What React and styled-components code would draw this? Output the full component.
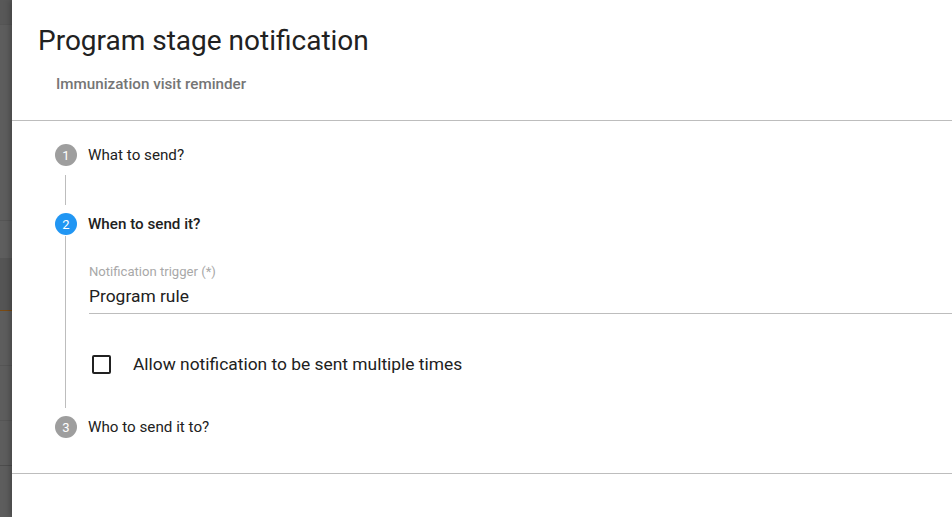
import React from 'react';
import styled, { createGlobalStyle } from 'styled-components';

const GlobalStyle = createGlobalStyle`
	html, body {
		margin: 0;
		padding: 0;
		height: 100%;
		overflow: hidden;
	}
	body {
		font-family: Roboto, 'Liberation Sans', sans-serif;
		background: #5c5c5c;
	}
	#root {
		height: 100%;
	}
`;

const Page = styled.div`
	display: flex;
	height: 517px;
	width: 952px;
`;

const Backdrop = styled.div`
	width: 12px;
	flex-shrink: 0;
	display: flex;
	flex-direction: column;
	background: #5d5d5d;
`;

const Band = styled.div`
	height: ${(p) => p.h}px;
	background: ${(p) => p.bg || '#5d5d5d'};
	border-bottom: 1px solid ${(p) => p.line || '#555'};
	flex-shrink: 0;
`;

const Dialog = styled.div`
	flex: 1;
	background: #fff;
	display: flex;
	flex-direction: column;
	overflow: hidden;
	box-shadow: -2px 0 6px rgba(0, 0, 0, 0.25);
`;

const Header = styled.div`
	padding: 24px 26px 0;
	height: 120px;
	box-sizing: border-box;
	flex-shrink: 0;
`;

const Title = styled.h2`
	margin: 0;
	font-size: 28px;
	font-weight: 400;
	line-height: 33px;
	color: #212121;
`;

const Subtitle = styled.div`
	margin: 19px 0 0 18px;
	font-size: 15.2px;
	font-weight: 500;
	line-height: 16px;
	color: #757575;
`;

const Divider = styled.div`
	height: 1px;
	background: #bdbdbd;
	flex-shrink: 0;
`;

const Stepper = styled.div`
	padding: 23px 0 35px 43px;
	display: flex;
	flex-direction: column;
`;

const StepRow = styled.div`
	display: flex;
	align-items: center;
	height: 22px;
`;

const StepIcon = styled.span`
	width: 22px;
	height: 22px;
	border-radius: 50%;
	background: ${(p) => (p.active ? '#2196f3' : '#9e9e9e')};
	color: #fff;
	font-size: 13px;
	display: flex;
	align-items: center;
	justify-content: center;
	flex-shrink: 0;
`;

const StepLabel = styled.span`
	margin-left: 11px;
	font-size: 15.2px;
	font-weight: ${(p) => (p.active ? 500 : 400)};
	color: #212121;
`;

const Connector = styled.div`
	margin: 9px 0 8px 10px;
	height: 30px;
	border-left: 1px solid #bdbdbd;
`;

const StepContent = styled.div`
	margin: 1px 0 8px 10px;
	border-left: 1px solid #bdbdbd;
	padding: 28px 0 35px 23px;
`;

const Field = styled.div`
	display: flex;
	flex-direction: column;
	border-bottom: 1px solid #bdbdbd;
	margin-right: -40px;
`;

const FieldLabel = styled.label`
	font-size: 13.1px;
	line-height: 16px;
	color: #a8a8a8;
`;

const FieldValue = styled.div`
	margin-top: 6px;
	padding-bottom: 7px;
	font-size: 17.4px;
	line-height: 20px;
	color: #212121;
`;

const CheckRow = styled.label`
	display: flex;
	align-items: center;
	margin-top: 41px;
	padding-left: 3px;
	height: 18px;
`;

const Box = styled.span`
	width: 15px;
	height: 15px;
	border: 2px solid #212121;
	border-radius: 2px;
	flex-shrink: 0;
`;

const CheckText = styled.span`
	margin-left: 22px;
	font-size: 17.4px;
	color: #212121;
`;

const App = () => {
	const bands = [
		{ h: 24, bg: '#585858' },
		{ h: 195 },
		{ h: 37, bg: '#5e5e5e' },
		{ h: 51, bg: '#555555', line: '#7a4a12' },
		{ h: 54 },
		{ h: 54 },
		{ h: 44, line: '#4d4d4d' },
		{ h: 60 },
	];

	return (
		<>
			<GlobalStyle />
			<Page>
				<Backdrop>
					{bands.map((b, i) => (
						<Band key={i} h={b.h} bg={b.bg} line={b.line} />
					))}
				</Backdrop>
				<Dialog>
					<Header>
						<Title>Program stage notification</Title>
						<Subtitle>Immunization visit reminder</Subtitle>
					</Header>
					<Divider />
					<Stepper>
						<StepRow>
							<StepIcon>1</StepIcon>
							<StepLabel>What to send?</StepLabel>
						</StepRow>
						<Connector />
						<StepRow>
							<StepIcon active>2</StepIcon>
							<StepLabel active>When to send it?</StepLabel>
						</StepRow>
						<StepContent>
							<Field>
								<FieldLabel>Notification trigger (*)</FieldLabel>
								<FieldValue>Program rule</FieldValue>
							</Field>
							<CheckRow>
								<Box />
								<CheckText>Allow notification to be sent multiple times</CheckText>
							</CheckRow>
						</StepContent>
						<StepRow>
							<StepIcon>3</StepIcon>
							<StepLabel>Who to send it to?</StepLabel>
						</StepRow>
					</Stepper>
					<Divider />
				</Dialog>
			</Page>
		</>
	);
};

export default App;
